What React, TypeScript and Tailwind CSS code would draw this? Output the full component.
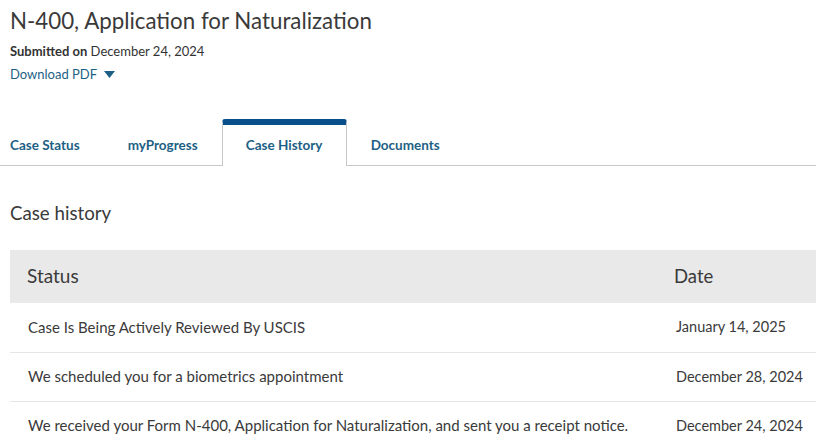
const rows = [
  { status: 'Case Is Being Actively Reviewed By USCIS', date: 'January 14, 2025' },
  { status: 'We scheduled you for a biometrics appointment', date: 'December 28, 2024' },
  {
    status: 'We received your Form N-400, Application for Naturalization, and sent you a receipt notice.',
    date: 'December 24, 2024',
  },
];

const tabs = ['Case Status', 'myProgress', 'Case History', 'Documents'];

export default function App() {
  return (
    <div className="h-[443px] w-[816px] overflow-hidden bg-white font-['Lato',sans-serif] text-[#333]">
      <div className="px-[10px] pt-[6px]">
        <h1 className="text-[22.3px] leading-[30px] text-[#3a3a3a]">N-400, Application for Naturalization</h1>
        <p className="mt-[7px] text-[13px] leading-[16px] text-[#333]">
          <span className="font-bold">Submitted on</span> December 24, 2024
        </p>
        <a className="mt-[6px] flex items-center gap-[7px] text-[13px] leading-[18px] text-[#1d5f85]">
          Download PDF
          <svg width="11" height="7" viewBox="0 0 11 7">
            <path d="M0 0h11L5.5 7z" fill="#1d5f85" />
          </svg>
        </a>
      </div>

      <div className="mt-[36px] flex h-[47px] items-stretch border-b border-[#c8c8c8]">
        {tabs.map(t =>
          t === 'Case History' ? (
            <div
              key={t}
              className="relative -mb-px ml-[24px] mr-[24px] flex w-[125px] items-center justify-center rounded-t-[3px] border-x border-t-[6px] border-[#c8c8c8] border-t-[#0b4f8a] bg-white text-[13.5px] font-bold text-[#1d5f85]"
            >
              {t}
            </div>
          ) : (
            <div
              key={t}
              className={`flex items-center pt-[6px] text-[13.5px] font-bold text-[#1d5f85] ${
                t === 'Case Status' ? 'ml-[10px] mr-[48px]' : ''
              }`}
            >
              {t}
            </div>
          )
        )}
      </div>

      <h2 className="ml-[10px] mt-[35px] text-[18.7px] leading-[24px] text-[#3a3a3a]">Case history</h2>

      <table className="ml-[10px] mt-[25px] w-[806px] border-collapse text-left">
        <thead>
          <tr className="h-[53px] bg-[#e9e9e9]">
            <th className="pl-[17px] text-[19px] font-normal text-[#3a3a3a]">Status</th>
            <th className="w-[142px] text-[18.5px] font-normal text-[#3a3a3a]">Date</th>
          </tr>
        </thead>
        <tbody>
          {rows.map(r => (
            <tr key={r.date} className="h-[49px] border-b border-[#e6e6e6] text-[#3a3a3a]">
              <td className="pl-[18px] text-[15px]">{r.status}</td>
              <td className="pl-[2px] text-[14.5px]">{r.date}</td>
            </tr>
          ))}
        </tbody>
      </table>
    </div>
  );
}
